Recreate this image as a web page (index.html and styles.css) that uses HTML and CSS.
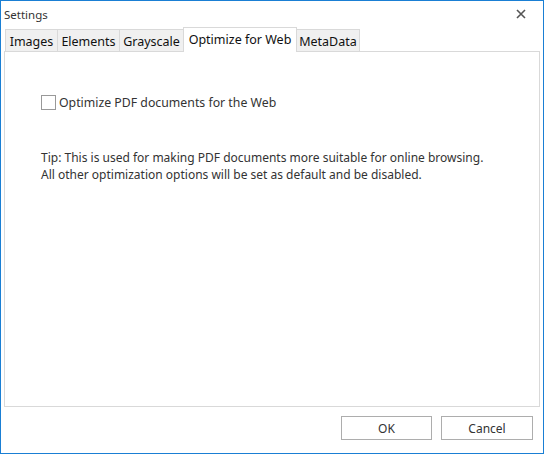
FILE: index.html
```html
<!DOCTYPE html>
<html>
<head>
<meta charset="utf-8">
<link rel="stylesheet" href="styles.css">
</head>
<body>
<div class="window">
  <div class="titlebar">
    <span class="title">Settings</span>
    <svg class="close" width="10" height="10" viewBox="0 0 10 10"><path d="M1 1L9 9M9 1L1 9" stroke="#555" stroke-width="1.6"/></svg>
  </div>
  <div class="tabs">
    <div class="tab w-images">Images</div>
    <div class="tab w-elements">Elements</div>
    <div class="tab w-gray">Grayscale</div>
    <div class="tab active w-opt">Optimize for Web</div>
    <div class="tab w-meta">MetaData</div>
  </div>
  <div class="panel">
    <label class="check-row">
      <span class="checkbox"></span>
      <span>Optimize PDF documents for the Web</span>
    </label>
    <p class="tip">Tip: This is used for making PDF documents more suitable for online browsing.<br>All other optimization options will be set as default and be disabled.</p>
  </div>
  <div class="footer">
    <button class="btn">OK</button>
    <button class="btn">Cancel</button>
  </div>
</div>
</body>
</html>
```
FILE: styles.css
```css
* { box-sizing: border-box; }
html, body { margin: 0; padding: 0; background: #fff; }
body {
  font-family: "Noto Sans", "Open Sans", sans-serif;
  font-size: 12px;
  color: #333;
}
.window {
  width: 544px;
  height: 454px;
  border: 1px solid #1a7fd4;
  display: flex;
  flex-direction: column;
  background: #fff;
}
.titlebar {
  height: 26px;
  display: flex;
  align-items: center;
  justify-content: space-between;
  padding: 0 17px 0 3px;
  flex: none;
}
.title { color: #333; font-size: 11.5px; }
.close { display: block; }
.tabs {
  height: 24px;
  display: flex;
  align-items: flex-start;
  padding-left: 4px;
  flex: none;
}
.tab {
  height: 22px;
  margin-top: 2px;
  margin-left: -1px;
  border: 1px solid #d9d9d9;
  border-bottom: none;
  background: #f0f0f0;
  color: #111;
  font-size: 12.5px;
  display: flex;
  align-items: center;
  justify-content: center;
  padding-top: 2px;
}
.tab:first-child { margin-left: 0; }
.tab.active {
  height: 25px;
  margin-top: 0;
  margin-bottom: -1px;
  background: #fff;
  position: relative;
  z-index: 1;
  padding-top: 0;
  padding-bottom: 2px;
}
.w-images { width: 53px; }
.w-elements { width: 63px; }
.w-gray { width: 65px; }
.w-opt { width: 114px; }
.w-meta { width: 64px; }
.panel {
  flex: 1;
  margin: 0 3px 0 3px;
  border: 1px solid #d9d9d9;
  padding: 42px 0 0 36px;
}
.check-row {
  display: flex;
  align-items: center;
  gap: 3px;
  color: #333;
  font-size: 12.3px;
}
.checkbox {
  width: 15px;
  height: 15px;
  border: 1px solid #999;
  background: #fff;
  flex: none;
}
.tip {
  margin: 38px 0 0 0;
  font-size: 12px;
  line-height: 17px;
  color: #333;
}
.footer {
  height: 46px;
  flex: none;
  display: flex;
  justify-content: flex-end;
  align-items: flex-start;
  padding: 9px 10px 0 0;
  gap: 9px;
}
.btn {
  width: 91px;
  height: 24px;
  border: 1px solid #adadad;
  background: #fff;
  font-family: inherit;
  font-size: 12px;
  color: #333;
  padding: 0;
}
.btn:last-child { width: 92px; }
```
